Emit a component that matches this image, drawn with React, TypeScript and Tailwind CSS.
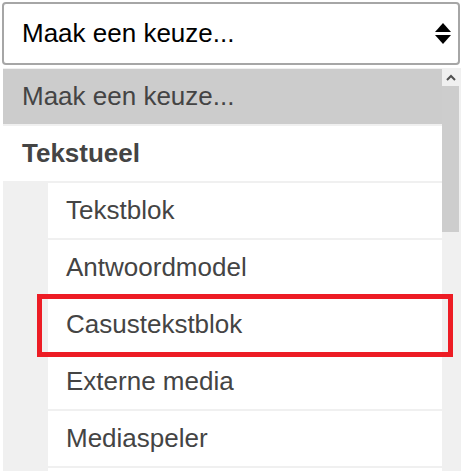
import React from 'react'

const items = ['Tekstblok', 'Antwoordmodel', 'Casustekstblok', 'Externe media', 'Mediaspeler']

function SelectArrows() {
  return (
    <svg width="16" height="21" viewBox="0 0 16 21" fill="#000">
      <polygon points="8,0 16,9 0,9" />
      <polygon points="0,12 16,12 8,21" />
    </svg>
  )
}

function Scrollbar() {
  return (
    <div className="w-[19px] shrink-0 bg-[#f0f0f0] flex flex-col">
      <div className="h-[18px] w-[17px] flex items-center justify-center">
        <svg width="10" height="7" viewBox="0 0 10 7" fill="none" stroke="#505050" strokeWidth="2">
          <polyline points="1,6 5,2 9,6" />
        </svg>
      </div>
      <div className="h-[146px] w-[17px] bg-[#cdcdcd]" />
    </div>
  )
}

export default function App() {
  return (
    <div
      className="w-[461px] h-[471px] overflow-hidden bg-white text-[26px]"
      style={{ fontFamily: '"Liberation Sans", Arial, sans-serif' }}
    >
      {/* closed select */}
      <div className="ml-[2px] mt-[2px] w-[458px] h-[63px] border-2 border-[#a6a6a6] rounded-[4px] flex items-center justify-between pl-[18px] pr-[7px] text-black">
        <span>Maak een keuze...</span>
        <SelectArrows />
      </div>

      {/* open list */}
      <div className="mt-[3px] ml-[3px] h-[403px] flex bg-[#f0f0f0] overflow-hidden">
        <div className="flex-1 flex flex-col gap-[2px] pt-[1px] text-[#444]">
          <div className="h-[55px] shrink-0 bg-[#cccccc] flex items-center pl-[19px]">Maak een keuze...</div>
          <div className="h-[55px] shrink-0 bg-white flex items-center pl-[19px] font-bold">Tekstueel</div>
          {items.map((label) => (
            <div key={label} className="relative h-[55px] shrink-0 ml-[45px] bg-white flex items-center pl-[18px]">
              {label}
              {label === 'Casustekstblok' && (
                <div className="absolute left-[-11px] right-[-11px] top-[-3px] bottom-[-5px] border-[5px] border-[#ed1c24] z-10" />
              )}
            </div>
          ))}
          <div className="h-[55px] shrink-0 ml-[45px] bg-white" />
        </div>
        <Scrollbar />
      </div>
    </div>
  )
}
